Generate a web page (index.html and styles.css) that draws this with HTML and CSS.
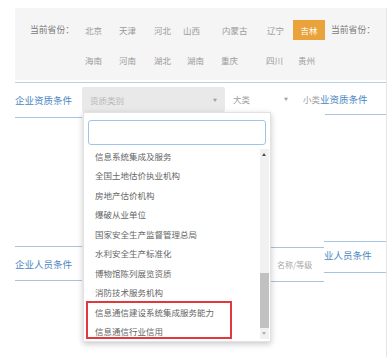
FILE: index.html
```html
<!DOCTYPE html>
<html lang="zh">
<head>
<meta charset="utf-8">
<link rel="stylesheet" href="styles.css">
</head>
<body>
<div class="page">
  <div class="provinces">
    <div class="row row1">
      <span class="label">当前省份：</span>
      <span>北京</span><span>天津</span><span>河北</span><span>山西</span><span>内蒙古</span><span>辽宁</span>
      <span class="active">吉林</span>
      <span class="label extra">当前省份：</span>
    </div>
    <div class="row row2">
      <span></span>
      <span>海南</span><span>河南</span><span>湖北</span><span>湖南</span><span>重庆</span><span>四川</span><span>贵州</span>
    </div>
  </div>

  <div class="sec sec-qual">
    <div class="sec-title">企业资质条件</div>
    <div class="select"><span>资质类别</span><span class="caret">▼</span></div>
    <span class="plain">大类</span>
    <span class="caret caret2">▼</span>
    <span class="plain small">小类</span>
    <div class="ghost-title">业资质条件</div>
  </div>

  <div class="sec sec-staff">
    <div class="sec-title staff-title">企业人员条件</div>
    <div class="spacer"></div>
    <div class="name-box">名称/等级</div>
    <div class="ghost-title ghost-staff">业人员条件</div>
  </div>

  <div class="dropdown">
    <div class="search"></div>
    <div class="list-wrap">
      <ul class="list">
        <li>信息系统集成及服务</li>
        <li>全国土地估价执业机构</li>
        <li>房地产估价机构</li>
        <li>爆破从业单位</li>
        <li>国家安全生产监督管理总局</li>
        <li>水利安全生产标准化</li>
        <li>博物馆陈列展览资质</li>
        <li>消防技术服务机构</li>
        <li>信息通信建设系统集成服务能力</li>
        <li>信息通信行业信用</li>
      </ul>
      <div class="scrollbar">
        <div class="arrow up"></div>
        <div class="track"></div>
        <div class="thumb"></div>
        <div class="arrow down"></div>
      </div>
    </div>
    <div class="highlight"></div>
  </div>
</div>
</body>
</html>
```

FILE: styles.css
```css
* { box-sizing: border-box; }
html, body {
  margin: 0;
  padding: 0;
  background: #ffffff;
}
body {
  width: 387px;
  height: 357px;
  overflow: hidden;
  font-family: "Noto Sans CJK SC", "Noto Sans", sans-serif;
  color: #9a9a9a;
}
.page {
  position: relative;
  width: 387px;
  height: 349px;
  margin-top: 8px;
  border-right: 1px solid #e6e6e6;
}

/* province panel */
.provinces {
  margin-left: 15px;
  height: 72px;
  background: #f5f5f5;
  padding-left: 15px;
  padding-top: 12px;
}
.row {
  display: grid;
  height: 20px;
  align-items: center;
  font-size: 8.5px;
  line-height: 20px;
  white-space: nowrap;
}
.row1 {
  grid-template-columns: 55px 34px 35px 29px 39px 45px 26px 32px 38px 20px;
}
.row2 {
  margin-top: 10px;
  grid-template-columns: 55px 34px 35px 33px 34px 45px 32px 30px;
}
.label {
  color: #7a7a7a;
  font-size: 8.8px;
}
.extra {
  padding-left: 6px;
}
.active {
  background: #e9a33a;
  color: #ffffff;
  text-align: center;
  height: 20px;
}

/* sections */
.sec {
  display: flex;
  margin-left: 15px;
}
.sec-qual {
  margin-top: 2px;
  border-top: 1px solid #b8d0e6;
  height: 36px;
}
.sec-title {
  width: 67px;
  height: 35px;
  display: flex;
  align-items: center;
  font-size: 9.5px;
  color: #4b87c3;
  border-bottom: 1px solid #a6c4e0;
  white-space: nowrap;
}
.select {
  margin-top: 4px;
  width: 143px;
  height: 25px;
  background: #e9e9e9;
  border-radius: 2px;
  display: flex;
  align-items: center;
  justify-content: space-between;
  padding: 0 8px 0 8px;
  font-size: 8.5px;
  color: #b8b8b8;
}
.caret {
  font-size: 4px;
  color: #a0a0a0;
}
.plain {
  margin-top: 4px;
  height: 25px;
  line-height: 25px;
  font-size: 8.5px;
  color: #a0a0a0;
  margin-left: 8px;
  white-space: nowrap;
}
.caret2 {
  margin-top: 4px;
  line-height: 25px;
  margin-left: 34px;
}
.small {
  margin-left: 15px;
}
.ghost-title {
  position: relative;
  flex: 1;
  height: 32px;
  display: flex;
  align-items: center;
  font-size: 9.5px;
  color: #4b87c3;
  white-space: nowrap;
}
.sec-qual .ghost-title::after {
  content: "";
  position: absolute;
  left: 5px;
  right: 0;
  bottom: 0;
  border-bottom: 1px solid #a6c4e0;
}

.sec-staff {
  margin-top: 123px;
  align-items: flex-start;
}
.staff-title {
  margin-top: 5px;
  border-top: 1px solid #a6c4e0;
}
.spacer {
  width: 188px;
}
.name-box {
  margin-top: 6px;
  width: 54px;
  height: 35px;
  border-top: 1px solid #a6c4e0;
  border-bottom: 1px solid #a6c4e0;
  padding-left: 7px;
  display: flex;
  align-items: center;
  font-size: 8px;
  color: #a8a8a8;
  white-space: nowrap;
}
.ghost-staff {
  height: 32px;
  padding-left: 0;
  border-top: 1px solid #a6c4e0;
  border-bottom: 1px solid #a6c4e0;
  align-items: flex-start;
  padding-top: 6px;
}

/* dropdown overlay */
.dropdown {
  position: absolute;
  left: 83px;
  top: 104px;
  width: 188px;
  height: 230px;
  background: #ffffff;
  box-shadow: 0 2px 6px rgba(0, 0, 0, 0.22);
  border: 1px solid #e2e2e2;
  padding-top: 7px;
}
.search {
  margin-left: 4px;
  width: 178px;
  height: 25px;
  border: 1px solid #9fc4e6;
  border-radius: 3px;
  background: #ffffff;
}
.list-wrap {
  display: flex;
  margin-top: 2px;
}
.list {
  list-style: none;
  margin: 0;
  padding: 0 0 0 11px;
  flex: 1;
}
.list li {
  height: 19.45px;
  line-height: 19.45px;
  font-size: 8.5px;
  color: #666666;
  white-space: nowrap;
}
.scrollbar {
  width: 9px;
  margin-right: 1px;
  margin-top: 2px;
  height: 190px;
  background: #f1f1f1;
  display: flex;
  flex-direction: column;
}
.arrow {
  height: 10px;
  position: relative;
}
.down {
  height: 11px;
}
.arrow::after {
  content: "";
  position: absolute;
  left: 2px;
  top: 4px;
  border-left: 2.5px solid transparent;
  border-right: 2.5px solid transparent;
}
.up::after {
  border-bottom: 3px solid #505050;
}
.down::after {
  border-top: 3px solid #b0b0b0;
}
.track {
  flex: 1;
}
.thumb {
  height: 55px;
  background: #c1c1c1;
}
.highlight {
  position: absolute;
  left: 2px;
  top: 188px;
  width: 146px;
  height: 38px;
  border: 2px solid #e03a3f;
}
```
